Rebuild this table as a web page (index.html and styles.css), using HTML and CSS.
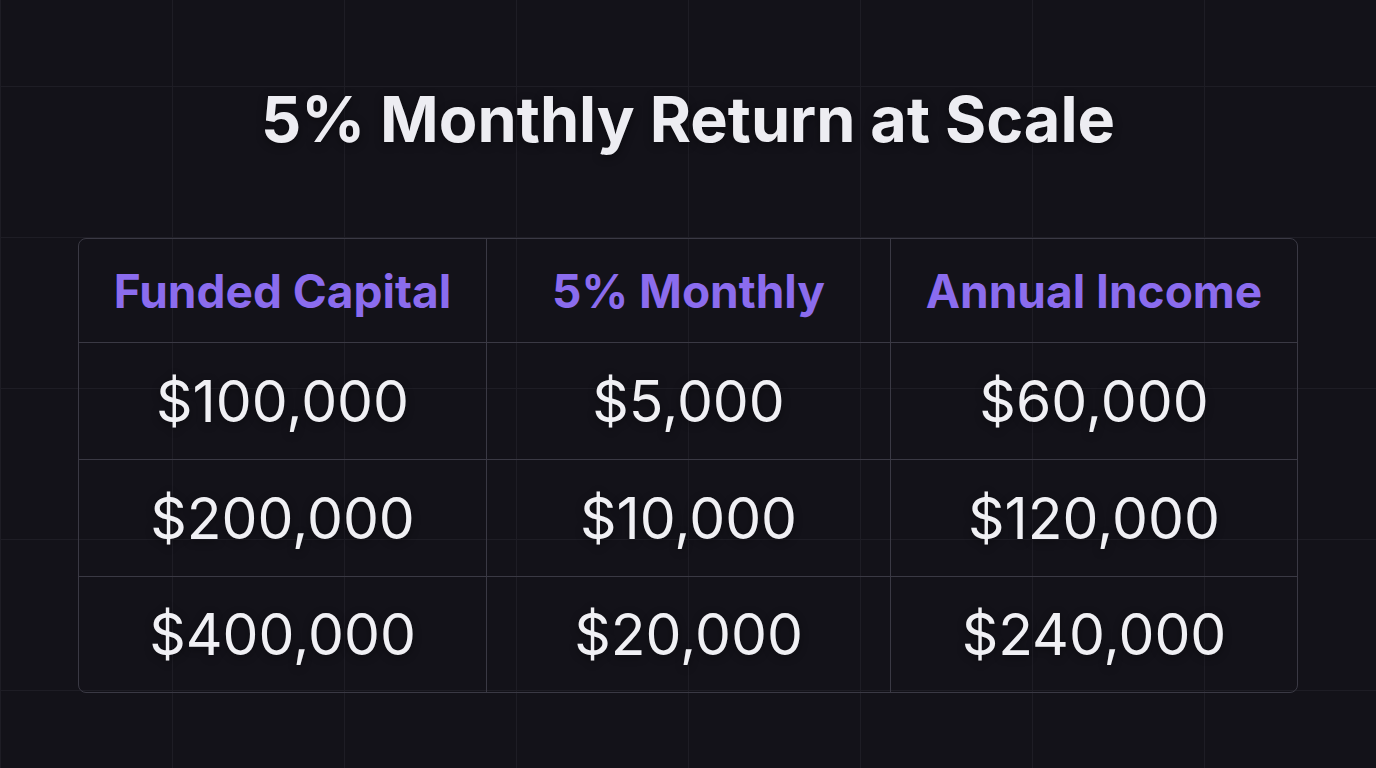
FILE: index.html
```html
<!DOCTYPE html>
<html lang="en">
<head>
<meta charset="utf-8">
<title>5% Monthly Return at Scale</title>
<link rel="stylesheet" href="styles.css">
</head>
<body>
<main class="page">
  <h1 class="title">5% Monthly Return at Scale</h1>
  <div class="table">
    <div class="cell head">Funded Capital</div>
    <div class="cell head">5% Monthly</div>
    <div class="cell head last-col">Annual Income</div>

    <div class="cell val">$100,000</div>
    <div class="cell val">$5,000</div>
    <div class="cell val last-col">$60,000</div>

    <div class="cell val">$200,000</div>
    <div class="cell val">$10,000</div>
    <div class="cell val last-col">$120,000</div>

    <div class="cell val last-row">$400,000</div>
    <div class="cell val last-row">$20,000</div>
    <div class="cell val last-row last-col">$240,000</div>
  </div>
</main>
</body>
</html>
```
FILE: styles.css
```css
html, body {
  margin: 0;
  padding: 0;
}
body {
  width: 1376px;
  height: 768px;
  overflow: hidden;
  background-color: #131219;
  background-image:
    linear-gradient(to right, #1e1d25 1px, transparent 1px),
    linear-gradient(to bottom, #1e1d25 1px, transparent 1px);
  background-size: 172px 151px, 172px 151px;
  background-position: 0 0, 0 86px;
  font-family: Inter, "Noto Sans", sans-serif;
}
.page {
  display: flex;
  flex-direction: column;
  align-items: center;
  padding-top: 81px;
  gap: 80px;
}
.title {
  margin: 0;
  font-size: 63px;
  line-height: 77px;
  font-weight: 700;
  color: #ededf2;
  letter-spacing: 0;
  text-shadow: 0 2px 10px rgba(0, 0, 0, 0.45);
}
.table {
  width: 1220px;
  box-sizing: border-box;
  border: 1px solid #3a3944;
  border-radius: 8px;
  display: grid;
  grid-template-columns: 408px 404px 1fr;
  grid-template-rows: 104px 117px 117px 115px;
}
.cell {
  display: flex;
  align-items: center;
  justify-content: center;
  border-right: 1px solid #3a3944;
  border-bottom: 1px solid #3a3944;
  box-sizing: border-box;
}
.cell.last-col { border-right: none; }
.cell.last-row { border-bottom: none; }
.head {
  font-size: 46px;
  font-weight: 700;
  color: #8b6cee;
}
.val {
  font-size: 57px;
  font-weight: 400;
  color: #f0f0f4;
  text-shadow: 0 2px 8px rgba(0, 0, 0, 0.4);
}
```
